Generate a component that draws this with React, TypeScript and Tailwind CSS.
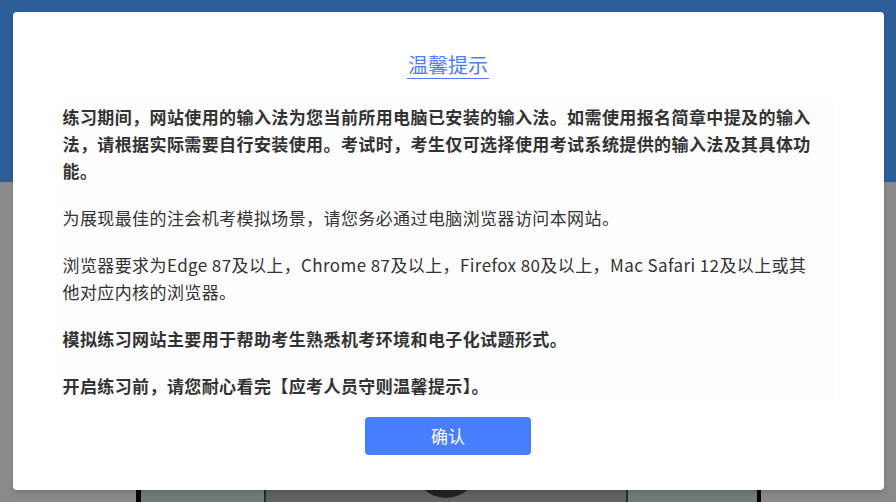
import React from "react";

const Backdrop: React.FC = () => {
  return (
    <div className="flex h-[502px] flex-col bg-[#8a8a8a]">
      <div className="h-[187px] bg-[#2e5e98]" />
      <div className="mt-[252px] flex h-[70px] pl-[136px]">
        <div className="w-[5px] bg-black" />
        <div className="w-[123px] bg-[#6f7c7b]" />
        <div className="w-[2px] bg-[#2a2a2a]" />
        <div className="flex w-[360px] justify-center bg-[#5f6366]">
          <div className="h-[64px] w-[64px] rounded-full bg-[#222324]" />
        </div>
        <div className="w-[2px] bg-[#2a2a2a]" />
        <div className="w-[129px] bg-[#6f7c7b]" />
        <div className="w-[4px] bg-black" />
      </div>
    </div>
  );
};

const NoticeModal: React.FC = () => {
  return (
    <div className="absolute left-0 right-0 top-[12px] mx-auto flex w-[871px] flex-col items-center rounded-[4px] bg-white pb-[35px] pt-[39px] shadow-md">
      <h2 className="border-b border-[#4a7dff] px-[1px] text-[20px] leading-[27px] text-[#4a7dff]">
        温馨提示
      </h2>
      <div className="mt-[24px] flex w-[771px] flex-col gap-[20px] bg-[#fdfdfd] text-[17px] leading-[27px] tracking-[0.4px] text-[#333]">
        <p className="font-bold">
          练习期间，网站使用的输入法为您当前所用电脑已安装的输入法。如需使用报名简章中提及的输入法，请根据实际需要自行安装使用。考试时，考生仅可选择使用考试系统提供的输入法及其具体功能。
        </p>
        <p>为展现最佳的注会机考模拟场景，请您务必通过电脑浏览器访问本网站。</p>
        <p>
          浏览器要求为Edge 87及以上，Chrome 87及以上，Firefox 80及以上，Mac Safari 12及以上或其
          <br />
          他对应内核的浏览器。
        </p>
        <p className="font-bold">模拟练习网站主要用于帮助考生熟悉机考环境和电子化试题形式。</p>
        <p className="font-bold">开启练习前，请您耐心看完【应考人员守则温馨提示】。</p>
      </div>
      <button className="mt-[18px] h-[38px] w-[166px] rounded-[4px] bg-[#477eff] text-[17px] text-white">
        确认
      </button>
    </div>
  );
};

export default function App() {
  return (
    <div className="relative h-[502px] w-[896px] overflow-hidden font-['Noto_Sans_CJK_SC','Noto_Sans',sans-serif]">
      <Backdrop />
      <NoticeModal />
    </div>
  );
}
